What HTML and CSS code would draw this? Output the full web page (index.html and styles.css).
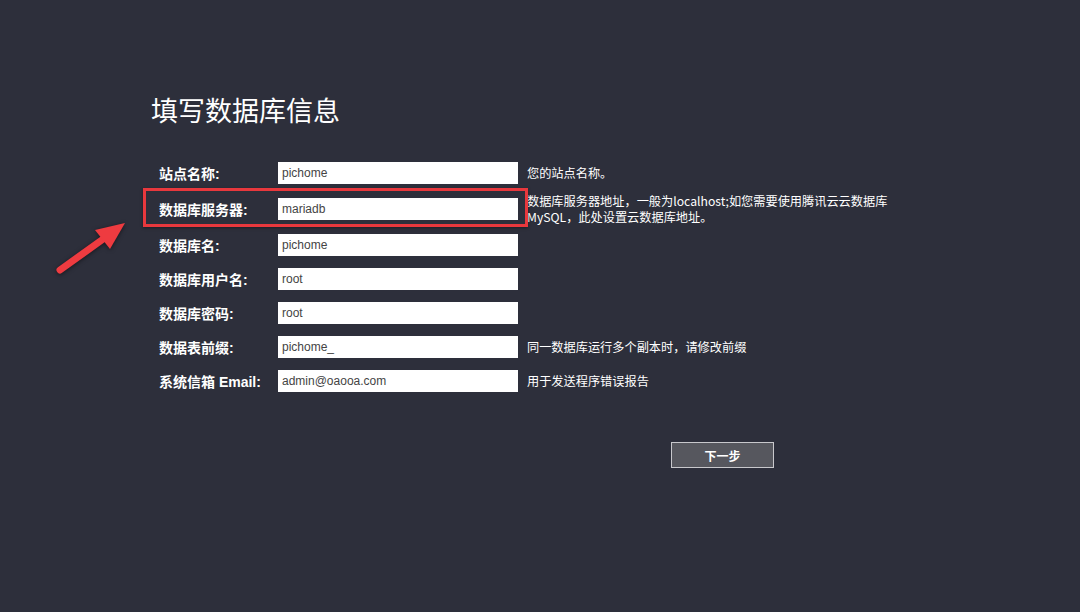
FILE: index.html
```html
<!DOCTYPE html>
<html lang="zh-CN">
<head>
    <meta charset="UTF-8">
    <title>填写数据库信息</title>
    <link rel="stylesheet" href="styles.css">
</head>
<body>
    <div class="page">
        <h1>填写数据库信息</h1>

        <div class="form">
            <div class="row">
                <label>站点名称:</label>
                <input type="text" value="pichome">
                <div class="hint">您的站点名称。</div>
            </div>
            <div class="row tall">
                <label>数据库服务器:</label>
                <input type="text" value="mariadb">
                <div class="hint">数据库服务器地址，一般为localhost;如您需要使用腾讯云云数据库MySQL，此处设置云数据库地址。</div>
            </div>
            <div class="row">
                <label>数据库名:</label>
                <input type="text" value="pichome">
                <div class="hint"></div>
            </div>
            <div class="row">
                <label>数据库用户名:</label>
                <input type="text" value="root">
                <div class="hint"></div>
            </div>
            <div class="row">
                <label>数据库密码:</label>
                <input type="text" value="root">
                <div class="hint"></div>
            </div>
            <div class="row">
                <label>数据表前缀:</label>
                <input type="text" value="pichome_">
                <div class="hint">同一数据库运行多个副本时，请修改前缀</div>
            </div>
            <div class="row">
                <label>系统信箱 Email:</label>
                <input type="text" value="admin@oaooa.com">
                <div class="hint">用于发送程序错误报告</div>
            </div>

            <!-- highlight around the server field -->
            <div class="mark"></div>
        </div>

        <div class="actions">
            <button>下一步</button>
        </div>
    </div>

    <svg class="arrow" width="1080" height="612" viewBox="0 0 1080 612">
        <line x1="60" y1="270" x2="106" y2="237" stroke="#ee3b40" stroke-width="7" stroke-linecap="round"/>
        <polygon points="125,223 110,249 95,230" fill="#ee3b40"/>
    </svg>
</body>
</html>
```

FILE: styles.css
```css
:root {
    --bg-color: #2d2f3b;
    --text-color: #ffffff;
    --mark-color: #e8383d;
}

body {
    margin: 0;
    background-color: var(--bg-color);
    color: var(--text-color);
    font-family: "Liberation Sans", Arial, "Noto Sans CJK SC", sans-serif;
    height: 612px;
    overflow: hidden;
}

.page {
    padding: 92px 0 0 151px;
}

h1 {
    margin: 0 0 28px;
    font-size: 27px;
    font-weight: normal;
    line-height: 36px;
    font-family: "Noto Sans CJK SC", sans-serif;
}

.form {
    position: relative;
    padding-left: 8px;
}

.row {
    display: grid;
    grid-template-columns: 119px 240px 380px;
    align-items: center;
    min-height: 34px;
}

.row.tall .hint {
    padding-top: 3px;
    padding-bottom: 3px;
}

label {
    font-size: 14px;
    font-weight: bold;
    font-family: "Liberation Sans", Arial, "Noto Sans CJK SC", sans-serif;
}

input {
    box-sizing: border-box;
    width: 240px;
    height: 22px;
    margin: 0;
    padding: 0 4px;
    border: none;
    background: #fff;
    color: #444;
    font-size: 12px;
    font-family: "Liberation Sans", Arial, sans-serif;
}

.hint {
    padding-left: 9px;
    font-size: 12.2px;
    line-height: 16px;
    font-family: "Noto Sans CJK SC", sans-serif;
}

.mark {
    position: absolute;
    left: -8px;
    top: 32px;
    width: 385px;
    height: 39px;
    box-sizing: border-box;
    border: 3px solid var(--mark-color);
    box-shadow: 0 1px 3px rgba(0, 0, 0, 0.4);
}

.actions {
    margin: 44px 0 0 520px;
}

button {
    width: 103px;
    height: 26px;
    background-color: #56575e;
    color: #fff;
    border: 1px solid #c8c8cc;
    font-size: 12px;
    font-weight: bold;
    font-family: "Noto Sans CJK SC", sans-serif;
    cursor: pointer;
}

.arrow {
    position: absolute;
    left: 0;
    top: 0;
    pointer-events: none;
    filter: drop-shadow(0 1px 2px rgba(0, 0, 0, 0.5));
}
```
